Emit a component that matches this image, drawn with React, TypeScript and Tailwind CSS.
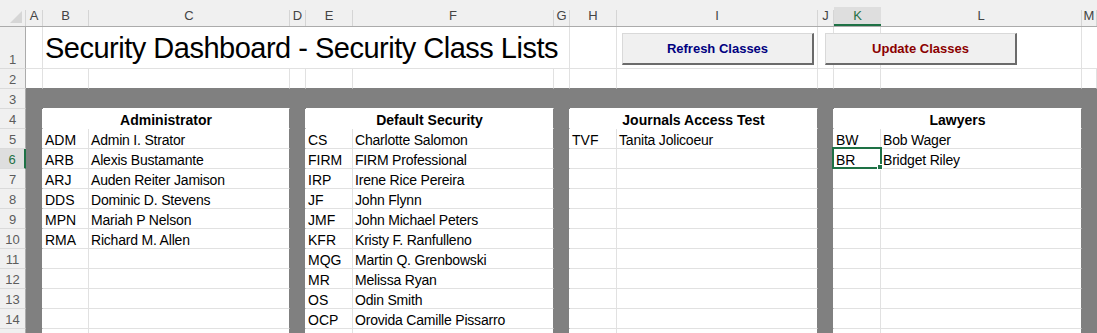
import React from 'react';

type Entry = [string, string];

const groups: { title: string; rows: Entry[] }[] = [
  {
    title: 'Administrator',
    rows: [
      ['ADM', 'Admin I. Strator'],
      ['ARB', 'Alexis Bustamante'],
      ['ARJ', 'Auden Reiter Jamison'],
      ['DDS', 'Dominic D. Stevens'],
      ['MPN', 'Mariah P Nelson'],
      ['RMA', 'Richard M. Allen'],
    ],
  },
  {
    title: 'Default Security',
    rows: [
      ['CS', 'Charlotte Salomon'],
      ['FIRM', 'FIRM Professional'],
      ['IRP', 'Irene Rice Pereira'],
      ['JF', 'John Flynn'],
      ['JMF', 'John Michael Peters'],
      ['KFR', 'Kristy F. Ranfulleno'],
      ['MQG', 'Martin Q. Grenbowski'],
      ['MR', 'Melissa Ryan'],
      ['OS', 'Odin Smith'],
      ['OCP', 'Orovida Camille Pissarro'],
    ],
  },
  {
    title: 'Journals Access Test',
    rows: [['TVF', 'Tanita Jolicoeur']],
  },
  {
    title: 'Lawyers',
    rows: [
      ['BW', 'Bob Wager'],
      ['BR', 'Bridget Riley'],
    ],
  },
];

// column letter + width class (M takes the rest)
const columns: [string, string][] = [
  ['A', 'w-[17px]'],
  ['B', 'w-[46px]'],
  ['C', 'w-[201px]'],
  ['D', 'w-[16px]'],
  ['E', 'w-[47px]'],
  ['F', 'w-[201px]'],
  ['G', 'w-[16px]'],
  ['H', 'w-[47px]'],
  ['I', 'w-[201px]'],
  ['J', 'w-[16px]'],
  ['K', 'w-[47px]'],
  ['L', 'w-[201px]'],
  ['M', 'flex-1'],
];

const gapWidths = ['w-[17px]', 'w-[16px]', 'w-[16px]', 'w-[16px]'];
const codeWidths = ['w-[46px]', 'w-[47px]', 'w-[47px]', 'w-[47px]'];
const mergedWidths = ['w-[247px]', 'w-[248px]', 'w-[248px]', 'w-[248px]'];

const RowHeader = ({ n, active = false, h = 'h-[20px]' }: { n?: number; active?: boolean; h?: string }) => (
  <div
    className={`${h} w-[26px] shrink-0 flex items-end justify-center text-[13px] leading-[16px] border-b border-b-[#dadada] ${
      active
        ? 'bg-[#dedede] text-[#1e7145] border-r-2 border-r-[#1e7145]'
        : 'bg-[#f0f0f0] text-[#5c5c5c] border-r border-r-[#ababab]'
    }`}
  >
    {n}
  </div>
);

const ColumnHeaders = () => (
  <div className="flex h-[27px] bg-[#f0f0f0] border-b border-[#ababab]">
    <div className="w-[26px] shrink-0 pt-[10px]">
      <div className="h-full border-r border-[#d5d5d5]">
        <svg width="25" height="16" viewBox="0 0 25 16" className="block">
          <polygon points="22,1 22,13 10,13" fill="#d6d6d6" />
        </svg>
      </div>
    </div>
    {columns.map(([letter, w]) =>
      letter === 'K' ? (
        <div key={letter} className={`${w} shrink-0 pt-[7px]`}>
          <div className="h-full bg-[#dedede] border-b-2 border-[#1e7145] flex items-center justify-center text-[13px] text-[#1e7145]">
            {letter}
          </div>
        </div>
      ) : (
        <div key={letter} className={`${w} shrink-0 pt-[10px]`}>
          <div className="h-full border-r border-[#d5d5d5] flex items-center justify-center pb-[4px] text-[13px] text-[#444444]">
            {letter}
          </div>
        </div>
      )
    )}
  </div>
);

const ActionButton = ({ label, color, left }: { label: string; color: string; left: string }) => (
  <button
    className={`absolute ${left} top-[33px] w-[192px] h-[32px] bg-[#f0f0f0] border-t border-l border-[#d9d9d9] border-b-2 border-r-2 border-b-[#6b6b6b] border-r-[#6b6b6b] flex items-center justify-center text-[13px] font-bold ${color}`}
  >
    {label}
  </button>
);

const TableRow = ({ r }: { r: number }) => (
  <div className="flex h-[20px]">
    <RowHeader n={r < 15 ? r : undefined} active={r === 6} />
    {groups.map((g, i) => {
      const gap = (
        <div
          className={`${gapWidths[i]} shrink-0 bg-[#808080] border-b border-r border-b-[#808080] ${
            r >= 4 ? 'border-r-white' : 'border-r-[#808080]'
          }`}
        />
      );
      if (r === 3) {
        return (
          <React.Fragment key={g.title}>
            {gap}
            <div className={`${mergedWidths[i]} shrink-0 bg-[#808080] border-r border-b border-r-[#808080] border-b-white`} />
          </React.Fragment>
        );
      }
      if (r === 4) {
        return (
          <React.Fragment key={g.title}>
            {gap}
            <div
              className={`${mergedWidths[i]} shrink-0 bg-white border-r border-b border-r-[#808080] border-b-white flex items-end justify-center font-bold text-[14px] leading-[16px] text-black`}
            >
              {g.title}
            </div>
          </React.Fragment>
        );
      }
      const entry = g.rows[r - 5];
      return (
        <React.Fragment key={g.title}>
          {gap}
          <div className={`${codeWidths[i]} shrink-0 bg-white border-r border-b border-[#e1e1e1] flex items-end pl-[2px] text-[14px] leading-[16px] text-black`}>
            {entry?.[0]}
          </div>
          <div className="w-[201px] shrink-0 bg-white border-r border-b border-r-[#808080] border-b-[#e1e1e1] flex items-end pl-[2px] text-[14px] leading-[16px] tracking-[-0.2px] text-black whitespace-nowrap">
            {entry?.[1]}
          </div>
        </React.Fragment>
      );
    })}
    <div className="flex-1 bg-[#808080]" />
  </div>
);

export default function App() {
  const tableRows = [3, 4, 5, 6, 7, 8, 9, 10, 11, 12, 13, 14, 15];

  return (
    <div className="relative w-[1097px] h-[333px] overflow-hidden bg-white font-['Liberation_Sans',Arial,sans-serif]">
      <ColumnHeaders />

      {/* row 1: title spills over B..G */}
      <div className="flex h-[42px]">
        <RowHeader n={1} h="h-[42px]" />
        <div className="w-[17px] shrink-0 border-r border-b border-[#e1e1e1]" />
        <div className="w-[527px] shrink-0 border-r border-b border-[#e1e1e1] flex items-end pl-[2px] pb-[3px] text-[29px] leading-[34px] tracking-[-0.5px] text-black whitespace-nowrap">
          Security Dashboard - Security Class Lists
        </div>
        <div className="w-[47px] shrink-0 border-r border-b border-[#e1e1e1]" />
        <div className="w-[201px] shrink-0 border-r border-b border-[#e1e1e1]" />
        <div className="w-[16px] shrink-0 border-r border-b border-[#e1e1e1]" />
        <div className="w-[47px] shrink-0 border-r border-b border-[#e1e1e1]" />
        <div className="w-[201px] shrink-0 border-r border-b border-[#e1e1e1]" />
        <div className="flex-1 border-b border-[#e1e1e1]" />
      </div>

      {/* row 2 */}
      <div className="flex h-[20px]">
        <RowHeader n={2} />
        {columns.map(([letter, w]) => (
          <div key={letter} className={`${w} shrink-0 border-r border-b border-r-[#e1e1e1] border-b-[#808080]`} />
        ))}
      </div>

      {tableRows.map((r) => (
        <TableRow key={r} r={r} />
      ))}

      <ActionButton label="Refresh Classes" color="text-[#000080]" left="left-[622px]" />
      <ActionButton label="Update Classes" color="text-[#8b0000]" left="left-[825px]" />

      {/* active cell K6 */}
      <div className="absolute left-[832px] top-[147px] w-[50px] h-[22px] border-2 border-[#1e7145]" />
      <div className="absolute left-[877px] top-[164px] w-[6px] h-[6px] bg-[#1e7145] border border-white" />
    </div>
  );
}
